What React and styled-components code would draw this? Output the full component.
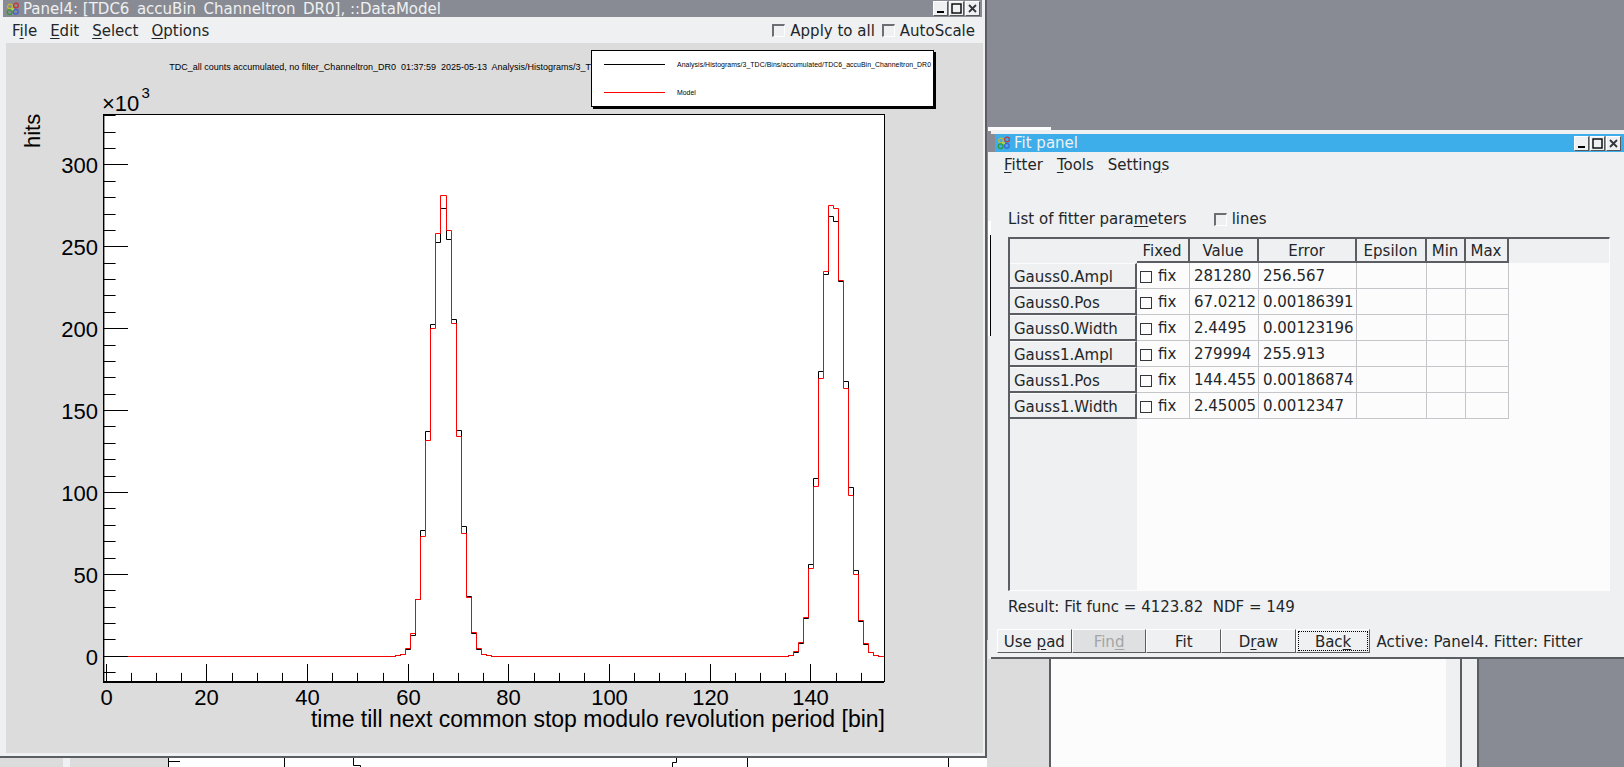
import React from 'react';
import styled, { createGlobalStyle } from 'styled-components';

const GlobalStyle = createGlobalStyle`
  html, body {
    margin: 0;
    padding: 0;
    background: #888b93;
  }
  #root {
    width: 1624px;
    height: 767px;
  }
`;

const Y_ZERO = 656.3;
const Y_SCALE = 1.638;
const X_ZERO = 106.3;
const X_SCALE = 5.033;

// snap to the middle of a pixel so 1px strokes stay crisp
const px = (value) => Math.floor(value) + 0.5;
const toX = (bin) => px(X_ZERO + X_SCALE * bin);
const toY = (thousands) => px(Y_ZERO - thousands * Y_SCALE);

const gauss = (ampl, pos, width, k) => ampl * Math.exp(-((k - pos) ** 2) / (2 * width * width));
const model = (k) => gauss(281.28, 67.0212, 2.4495, k) + gauss(279.994, 144.455, 2.45005, k);

// pixel rows where the measured histogram differs from the fit
const measured = {
  60: 649.3, 61: 635, 62: 599.3, 63: 530.3, 64: 431, 65: 324.3, 66: 242.3, 67: 208.3, 68: 239.3,
  69: 319.3, 70: 430.3, 71: 526.3, 72: 596.3, 73: 633.3, 74: 649.3, 75: 654,
  137: 652.3, 138: 643, 139: 618, 140: 564.3, 141: 478.3, 142: 371.3, 143: 274.3, 144: 216.3,
  145: 221.3, 146: 281.3, 147: 381.3, 148: 487.3, 149: 570.3, 150: 621.3, 151: 644, 152: 652.5,
};

const stepPath = (rowFor) => {
  let d = `M${toX(0.5)} ${rowFor(1)}`;
  for (let k = 1; k <= 154; k++) {
    d += `L${toX(k - 0.5)} ${rowFor(k)}L${toX(k + 0.5)} ${rowFor(k)}`;
  }
  return d;
};

const fitPath = stepPath((k) => toY(model(k)));
const dataPath = stepPath((k) => (measured[k] !== undefined ? px(measured[k]) : toY(model(k))));

const yTicks = Array.from({ length: 35 }, (_, i) => i - 1);
const xTicks = Array.from({ length: 31 }, (_, i) => i * 5);
const yLabels = [0, 50, 100, 150, 200, 250, 300];
const xLabels = [0, 20, 40, 60, 80, 100, 120, 140];

const parameters = [
  ['Gauss0.Ampl', '281280', '256.567'],
  ['Gauss0.Pos', '67.0212', '0.00186391'],
  ['Gauss0.Width', '2.4495', '0.00123196'],
  ['Gauss1.Ampl', '279994', '255.913'],
  ['Gauss1.Pos', '144.455', '0.00186874'],
  ['Gauss1.Width', '2.45005', '0.0012347'],
];

const Desktop = styled.div`
  position: relative;
  width: 1624px;
  height: 767px;
  overflow: hidden;
  background: #888b93;
  font-family: 'DejaVu Sans', sans-serif;
  font-size: 15px;
  color: #232629;
`;

/* windows on the desktop */
const BackWindow = styled.div`
  position: absolute;
  left: 0;
  top: 640px;
  width: 1477px;
  height: 127px;
  display: flex;
  background: #dcdcdc;
  border-right: 2px solid #5a5e63;
`;

const BackGutter = styled.div`
  width: 168px;
  background: linear-gradient(to right, #dcdcdc 63px, #eff0f1 63px, #eff0f1 70px, #dcdcdc 70px);
`;

const BackChart = styled.svg`
  display: block;
  width: 819px;
  height: 127px;
  background: #fff;
`;

const BackGap = styled.div`
  width: 62px;
`;

const BackList = styled.div`
  flex: 1;
  background: #fcfcfc;
  border-left: 2px solid #5a5e63;
`;

const BackScroll = styled.div`
  width: 14px;
  background: #eff0f1;
  border-right: 2px solid #5a5e63;
`;

const BackMargin = styled.div`
  width: 15px;
  background: #eff0f1;
`;

const BackEdge = styled.div`
  position: absolute;
  left: 988px;
  top: 127px;
  width: 63px;
  height: 4px;
  background: #fcfcfc;
`;

const BackSliver = styled.div`
  position: absolute;
  left: 988px;
  top: 131px;
  width: 3px;
  height: 528px;
  display: flex;
  flex-direction: column;
  background: #eff0f1;
  overflow: hidden;
`;

const SliverGray = styled.div`
  height: 21px;
  background: #888b93;
`;

const SliverGap = styled.div`
  height: 69px;
`;

const SliverWhite = styled.div`
  height: 115px;
  background:
    linear-gradient(to bottom, #fff 14px, transparent 14px),
    linear-gradient(to right, #fff 2px, #000 2px);
`;

const Panel4 = styled.div`
  position: absolute;
  left: 0;
  top: 0;
  width: 985px;
  height: 756px;
  display: flex;
  flex-direction: column;
  background: #eff0f1;
  border-right: 2px solid #5a5e63;
  border-bottom: 2px solid #5a5e63;
`;

const PanelTitle = styled.div`
  display: flex;
  align-items: center;
  height: 17px;
  margin: 0 3px;
  padding-left: 3px;
  background: #888b93;
  color: #eff0f1;
  font-size: 15px;
  white-space: pre;
`;

const TitleText = styled.span`
  flex: 1;
  margin-left: 3px;
`;

const RingIcon = styled.svg`
  display: block;
  width: 14px;
  height: 14px;
  flex: none;
`;

const WinButtons = styled.div`
  display: flex;
  gap: 1px;
  margin-right: 2px;
`;

const WinButton = styled.svg`
  display: block;
  width: 15px;
  height: 15px;
  background: #eff0f1;
  border-top: 1px solid #fff;
  border-left: 1px solid #fff;
  border-right: 1px solid #55585d;
  border-bottom: 1px solid #55585d;
  box-sizing: border-box;
`;

const MenuBar = styled.div`
  display: flex;
  align-items: center;
  justify-content: space-between;
  height: 26px;
  box-sizing: border-box;
  padding: 1px 10px 0 12px;
`;

const Menus = styled.div`
  display: flex;
  gap: 13px;
`;

const Mn = styled.span`
  text-decoration: underline;
  text-underline-offset: 2px;
`;

const ScaleOptions = styled.div`
  display: flex;
  align-items: center;
  gap: 5px;
`;

const ScaleBox = styled.span`
  width: 13px;
  height: 13px;
  box-sizing: border-box;
  border-top: 2px solid #6b6e73;
  border-left: 2px solid #6b6e73;
  border-right: 1px solid #fff;
  border-bottom: 1px solid #fff;
  margin-left: ${({ $spaced }) => ($spaced ? '2px' : '0')};
`;

const CanvasPane = styled.div`
  flex: 1;
  margin: 0 2px 3px 6px;
  background: #dcdcdc;
`;

const PlotSvg = styled.svg`
  display: block;
  width: 100%;
  height: 100%;
`;

const TickLabel = styled.text`
  font-family: 'Liberation Sans', Arial, sans-serif;
  font-size: ${({ $size }) => $size || 22}px;
  fill: #000;
`;

const SmallLabel = styled.text`
  font-family: 'Liberation Sans', Arial, sans-serif;
  font-size: ${({ $size }) => $size}px;
  fill: #000;
  white-space: pre;
`;

const FitWindow = styled.div`
  position: absolute;
  left: 991px;
  top: 130px;
  width: 633px;
  height: 529px;
  box-sizing: border-box;
  padding-top: 4px;
  display: flex;
  flex-direction: column;
  background: #eff0f1;
  border-bottom: 2px solid #5a5e63;
`;

const FitTitle = styled.div`
  display: flex;
  align-items: center;
  height: 18px;
  padding: 0 1px 0 2px;
  background: #3daee9;
  border-left: 4px solid #888b93;
  color: #eff0f1;
  font-size: 15px;
`;

const FitMenu = styled.div`
  display: flex;
  gap: 14px;
  align-items: center;
  height: 24px;
  box-sizing: border-box;
  padding: 1px 0 0 13px;
`;

const ListRow = styled.div`
  display: flex;
  align-items: center;
  height: 24px;
  margin-top: 31px;
  padding-left: 17px;
`;

const LinesOption = styled.div`
  display: flex;
  align-items: center;
  gap: 5px;
  margin-left: 27px;
`;

const TableFrame = styled.div`
  height: 354px;
  margin: 6px 14px 0 17px;
  box-sizing: border-box;
  border-top: 2px solid #5a5e63;
  border-left: 2px solid #5a5e63;
  border-right: 1px solid #fcfcfc;
  border-bottom: 1px solid #fcfcfc;
  background: linear-gradient(to right, #eff0f1 127px, #fcfcfc 127px);
`;

const ParamGrid = styled.div`
  display: grid;
  grid-template-columns: 127px 53px 69px 98px 70px 39px 43px 1fr;
  grid-template-rows: 24px repeat(6, 26px);
`;

const CornerCell = styled.div`
  background: #eff0f1;
`;

const HeadCell = styled.div`
  display: flex;
  align-items: center;
  justify-content: center;
  padding: 1px 1px 0 0;
  background: #eff0f1;
  box-sizing: border-box;
  border-right: 2px solid #5a5e63;
  border-bottom: 2px solid #5a5e63;
`;

const RowHead = styled.div`
  display: flex;
  align-items: center;
  padding: 2px 0 0 4px;
  background: #eff0f1;
  box-sizing: border-box;
  border-top: 1px solid #fcfcfc;
  border-right: 2px solid #5a5e63;
  border-bottom: 2px solid #5a5e63;
`;

const DataCell = styled.div`
  display: flex;
  align-items: center;
  gap: 6px;
  padding-left: 4px;
  box-sizing: border-box;
  border-right: 1px solid #c4c6c9;
  border-bottom: 1px solid #c4c6c9;
`;

const FillCell = styled.div`
  grid-column: 8;
`;

const FixBox = styled.span`
  width: 12px;
  height: 12px;
  margin: 3px 0 0 -1px;
  box-sizing: border-box;
  border: 1px solid #31363b;
  background: #fcfcfc;
`;

const ResultRow = styled.div`
  display: flex;
  align-items: center;
  height: 30px;
  box-sizing: border-box;
  padding: 2px 0 0 17px;
  white-space: pre;
`;

const ButtonRow = styled.div`
  display: flex;
  align-items: center;
  margin-top: 8px;
  padding-left: 6px;
`;

const ActionButton = styled.div`
  width: 74.7px;
  height: 24px;
  box-sizing: border-box;
  padding-top: 1px;
  display: flex;
  align-items: center;
  justify-content: center;
  background: ${({ $disabled }) => ($disabled ? '#dfe0e1' : '#eff0f1')};
  color: ${({ $disabled }) => ($disabled ? '#a3a5a7' : '#232629')};
  border-top: 1px solid #fff;
  border-left: 1px solid #fff;
  border-right: 1px solid #5a5e63;
  border-bottom: 1px solid #5a5e63;
  outline: ${({ $focused }) => ($focused ? '1px dotted #000' : 'none')};
  outline-offset: -3px;
`;

const ActiveText = styled.span`
  margin-left: 6px;
  padding-top: 1px;
  letter-spacing: 0.1px;
`;

const Rings = () => (
  <RingIcon viewBox="0 0 14 14" fill="none" strokeWidth="1.2">
    <circle cx="4" cy="4.5" r="2.4" stroke="#c9b82c" />
    <circle cx="10" cy="3.5" r="2.4" stroke="#c5343c" />
    <circle cx="3.6" cy="10.3" r="2.4" stroke="#2f9a3a" />
    <circle cx="9.8" cy="9.8" r="2.4" stroke="#3f62d8" />
    <circle cx="6.6" cy="7.2" r="1.4" fill="#9fd64a" stroke="none" />
  </RingIcon>
);

const WindowButtons = () => (
  <WinButtons>
    <WinButton viewBox="0 0 13 13">
      <rect x="3" y="9" width="7" height="2" fill="#000" />
    </WinButton>
    <WinButton viewBox="0 0 13 13">
      <rect x="2" y="2" width="9" height="9" fill="none" stroke="#000" strokeWidth="1.4" />
    </WinButton>
    <WinButton viewBox="0 0 13 13">
      <path d="M3 3L10 10M10 3L3 10" stroke="#31363b" strokeWidth="1.8" />
    </WinButton>
  </WinButtons>
);

const Plot = () => (
  <PlotSvg viewBox="6 43 977 710">
    {/* the legend cuts this line off at 3_T */}
    <SmallLabel x="169.3" y="70" $size="9" xmlSpace="preserve">
      TDC_all counts accumulated, no filter_Channeltron_DR0  01:37:59  2025-05-13  Analysis/Histograms/3_T
    </SmallLabel>

    <rect x="593" y="52" width="343" height="57" fill="#000" />
    <rect x="591.5" y="50.5" width="342" height="56" fill="#fff" stroke="#000" />
    <line x1="604" y1="64.5" x2="665" y2="64.5" stroke="#000" />
    <line x1="604" y1="92.5" x2="665" y2="92.5" stroke="#f00" />
    <SmallLabel x="677" y="67" $size="6.9" textLength="254">
      Analysis/Histograms/3_TDC/Bins/accumulated/TDC6_accuBin_Channeltron_DR0
    </SmallLabel>
    <SmallLabel x="677" y="95" $size="6.9">Model</SmallLabel>

    <rect x="103" y="114.5" width="781" height="567" fill="#fff" />
    <path d={dataPath} fill="none" stroke="#000" strokeWidth="1" />
    <path d={fitPath} fill="none" stroke="#f00" strokeWidth="1" />

    {yTicks.map((t) => (
      <line key={t} x1="103" x2={t % 5 === 0 ? 128 : 115.6} y1={toY(t * 10)} y2={toY(t * 10)} stroke="#000" />
    ))}
    {xTicks.map((t) => (
      <line key={t} x1={toX(t)} x2={toX(t)} y1="681.7" y2={t % 20 === 0 ? 664 : 672.9} stroke="#000" />
    ))}
    <rect x="103.5" y="114.5" width="781" height="567" fill="none" stroke="#000" strokeWidth="1" />
    <line x1="103.7" y1="114.5" x2="103.7" y2="682" stroke="#000" strokeWidth="1.4" />
    <line x1="103" y1="682" x2="884" y2="682" stroke="#000" strokeWidth="1.8" />

    {yLabels.map((v) => (
      <TickLabel key={v} x="98" y={toY(v) + 8} textAnchor="end">{v}</TickLabel>
    ))}
    {xLabels.map((v) => (
      <TickLabel key={v} x={toX(v)} y="705" textAnchor="middle">{v}</TickLabel>
    ))}
    <TickLabel x="102" y="111">×10</TickLabel>
    <SmallLabel x="141.5" y="98" $size="15">3</SmallLabel>
    <TickLabel transform="translate(39.5 148) rotate(-90)">hits</TickLabel>
    <TickLabel x="885" y="727.3" textAnchor="end" $size="23">time till next common stop modulo revolution period [bin]</TickLabel>
  </PlotSvg>
);

const App = () => (
  <Desktop>
    <GlobalStyle />

    <BackWindow>
      <BackGutter />
      <BackChart viewBox="168 640 819 127">
        <path d="M168.5 758V767M168 761.5H180M284.5 758V767M353.5 758V765.5H360.5V767M676.5 758V762.5H672.5V767M747.5 758V767M948.5 758V767" fill="none" stroke="#000" />
      </BackChart>
      <BackGap />
      <BackList />
      <BackScroll />
      <BackMargin />
    </BackWindow>

    <BackEdge />
    <BackSliver>
      <SliverGray />
      <SliverGap />
      <SliverWhite />
    </BackSliver>

    <Panel4>
      <PanelTitle>
        <Rings />
        <TitleText>Panel4: [TDC6_accuBin_Channeltron_DR0], ::DataModel</TitleText>
        <WindowButtons />
      </PanelTitle>
      <MenuBar>
        <Menus>
          <span>F<Mn>i</Mn>le</span>
          <span><Mn>E</Mn>dit</span>
          <span><Mn>S</Mn>elect</span>
          <span><Mn>O</Mn>ptions</span>
        </Menus>
        <ScaleOptions>
          <ScaleBox />
          <span>Apply to all</span>
          <ScaleBox $spaced />
          <span>AutoScale</span>
        </ScaleOptions>
      </MenuBar>
      <CanvasPane>
        <Plot />
      </CanvasPane>
    </Panel4>

    <FitWindow>
      <FitTitle>
        <Rings />
        <TitleText>Fit panel</TitleText>
        <WindowButtons />
      </FitTitle>
      <FitMenu>
        <span><Mn>F</Mn>itter</span>
        <span><Mn>T</Mn>ools</span>
        <span>Settin<Mn>g</Mn>s</span>
      </FitMenu>
      <ListRow>
        <span>List of fitter para<Mn>m</Mn>eters</span>
        <LinesOption>
          <ScaleBox />
          <span>lines</span>
        </LinesOption>
      </ListRow>
      <TableFrame>
        <ParamGrid>
          <CornerCell />
          <HeadCell>Fixed</HeadCell>
          <HeadCell>Value</HeadCell>
          <HeadCell>Error</HeadCell>
          <HeadCell>Epsilon</HeadCell>
          <HeadCell>Min</HeadCell>
          <HeadCell>Max</HeadCell>
          <CornerCell />
          {parameters.map(([name, value, error]) => (
            <React.Fragment key={name}>
              <RowHead>{name}</RowHead>
              <DataCell><FixBox />fix</DataCell>
              <DataCell>{value}</DataCell>
              <DataCell>{error}</DataCell>
              <DataCell />
              <DataCell />
              <DataCell />
              <FillCell />
            </React.Fragment>
          ))}
        </ParamGrid>
      </TableFrame>
      <ResultRow>Result: Fit func = 4123.82  NDF = 149</ResultRow>
      <ButtonRow>
        <ActionButton><span>Use <Mn>p</Mn>ad</span></ActionButton>
        <ActionButton $disabled><span>Fin<Mn>d</Mn></span></ActionButton>
        <ActionButton>Fit</ActionButton>
        <ActionButton><span>D<Mn>r</Mn>aw</span></ActionButton>
        <ActionButton $focused><span>Bac<Mn>k</Mn></span></ActionButton>
        <ActiveText>Active: Panel4. Fitter: Fitter</ActiveText>
      </ButtonRow>
    </FitWindow>
  </Desktop>
);

export default App;
